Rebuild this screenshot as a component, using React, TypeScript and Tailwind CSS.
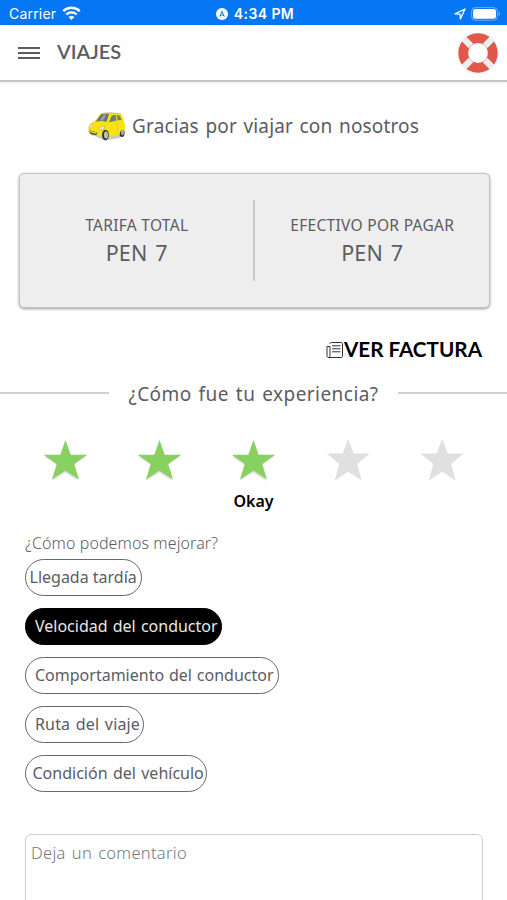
import type { ReactNode } from 'react';

interface Reason {
  label: string;
  selected?: boolean;
  box: string;
}

const REASONS: Reason[] = [
  { label: 'Llegada tardía', box: 'w-[117px] pl-[3.5px]' },
  { label: 'Velocidad del conductor', selected: true, box: 'w-[197px] pl-[9px] [word-spacing:1px]' },
  { label: 'Comportamiento del conductor', box: 'w-[254px] pl-[9px] [word-spacing:0.7px]' },
  { label: 'Ruta del viaje', box: 'w-[119px] pl-[9px] tracking-[0.15px] [word-spacing:1.3px]' },
  { label: 'Condición del vehículo', box: 'w-[182px] pl-[6.5px] [word-spacing:1.2px]' },
];

const WifiIcon = () => (
  <svg width="19" height="15" viewBox="0 0 19 15" fill="none" stroke="white">
    <path d="M1.3 5.1a11.7 11.7 0 0 1 16.4 0" strokeWidth="2.5" />
    <path d="M4.3 8.5a7.4 7.4 0 0 1 10.4 0" strokeWidth="2.4" />
    <path d="M9.5 14 6.6 11.1a4.1 4.1 0 0 1 5.8 0Z" fill="white" stroke="none" />
  </svg>
);

const LocationBadge = () => (
  <svg width="12" height="12" viewBox="0 0 12 12">
    <circle cx="6" cy="6" r="6" fill="white" />
    <path d="M6 2.3 8.9 9 6 7.2 3.1 9Z" fill="#0879f6" />
    <path d="M6 4.6 6.9 6.8H5.1Z" fill="white" />
  </svg>
);

const ArrowIcon = () => (
  <svg width="12" height="12" viewBox="0 0 12 12" fill="none" stroke="white" strokeWidth="1.3" strokeLinejoin="round">
    <path d="M1 5.8 11 1 6.4 11 6 6.1Z" />
  </svg>
);

const BatteryIcon = () => (
  <svg width="30" height="14" viewBox="0 0 30 14">
    <rect x="0.6" y="0.6" width="25.8" height="12.6" rx="3.8" fill="none" stroke="white" strokeOpacity="0.4" />
    <rect x="2" y="2" width="23" height="9.8" rx="2.4" fill="white" />
    <path d="M27.7 4.8c1.5.5 1.5 3.8 0 4.3Z" fill="white" fillOpacity="0.5" />
  </svg>
);

const LifebuoyIcon = () => (
  <svg width="42" height="42" viewBox="0 0 42 42">
    <circle cx="21" cy="21" r="14.9" fill="none" stroke="#e2574c" strokeWidth="10" />
    <path
      d="M6.8 6.8 14 14M28 28l7.2 7.2M35.2 6.8 28 14M14 28l-7.2 7.2"
      stroke="#efedef"
      strokeWidth="6.5"
    />
    <circle cx="21" cy="21" r="20.2" fill="none" stroke="#f1eff1" strokeWidth="0.7" />
  </svg>
);

const CarIcon = () => (
  <svg width="38" height="30" viewBox="0 0 38 30">
    {/* Shadow, far wheel, body */}
    <path d="M4 23 17 28.5 31 26 36 23 30 21Z" fill="#c9c9c3" />
    <ellipse cx="34" cy="20.5" rx="2.6" ry="4.6" fill="#30343a" />
    <path d="M.5 17c0-3.500 1.500-6 6-8l5-6c1.500-1.500 4-2 8-2h8c4 0 6 1 7 3.500l2.200 7c.8 4 .1 7-.8 8.500-.8-3.500-3.600-2-4.400 2.500L19 25 4 23.500c-2.500-1-3.500-3.500-3.500-6.500Z" fill="#f8e30c" />
    {/* Windows */}
    <path d="M7.800 9.800 12.400 3.200C14 1.800 17 1.600 21 2L18.500 9.800C15 8.800 11.500 9 7.800 9.800Z" fill="#5f7278" />
    <path d="m11.500 8.500 4-6 3.200-.2-3.200 6.200Z" fill="#8fa1a3" />
    <path d="M21 10.300 23.700 3.400c3-.8 6.800-.5 8.300.6l1.600 4c-3.500.3-7.800 1.200-12.600 2.300Z" fill="#6e7d78" />
    <path d="m28.200 3 1 6" stroke="#f0d90e" strokeWidth="1.200" />
    <path d="M11.500 3.200C15 0 26 0 33.500 2.800" fill="none" stroke="#b3a91e" strokeWidth="0.600" />
    {/* Headlights and grille */}
    <path d="m1.500 14 2.800-1.800 1.200 1.800-4 2.400Zm9.500 1.500 6-1.700-1 3.200-4.500 1Z" fill="#edeee0" stroke="#a5a030" strokeWidth="0.400" />
    <path d="m1 18.300 8.300 2-.8 3-6-1.300Z" fill="#54523a" />
    <path d="M2 19.500 8.500 21.100" stroke="#e2e2da" strokeWidth="1.200" />
    <path d="M29.200 10.500l.2 11" fill="none" stroke="#cdb912" strokeWidth="0.500" />
    <ellipse cx="17.400" cy="23" rx="3.400" ry="5.300" fill="#34373b" />
    <ellipse cx="18" cy="23" rx="2" ry="3.500" fill="#bfc1bd" />
    <ellipse cx="34.500" cy="20.300" rx="1.400" ry="3" fill="#aeb0aa" />
  </svg>
);

const InvoiceIcon = () => (
  <svg width="18" height="18" viewBox="0 0 18 18" fill="none" stroke="#333" strokeWidth="1">
    <path d="M4 3c0-1 .5-1.500 1.500-1.500H15c1 0 1.500.5 1.500 1.500v12c0 1-.5 1.500-1.500 1.500H3C1.500 16.500 1 16 1 14.500V5.500h3v9c0 1.300-.5 2-1.500 2M6 4.800h8.500M6 7.800h8.500M6 10.800h8.500" />
  </svg>
);

const Star = ({ filled }: { filled: boolean }) => (
  <svg width="46" height="44" viewBox="0 0 46 44">
    {filled && <path d="m23 3 5.100 14.500H44L31 26.500 36 42 23 33.500 10 42 15 26.500 2 17.500h15.900Z" fill="#e2e0e8" />}
    <path
      d={
        filled
          ? 'm23.500 1 5.200 14.700H45.300L32.200 25 37.100 40.500 23.500 31.700 9.900 40.500 14.800 25 1.700 15.700h16.600Z'
          : 'm23.200 0 5.600 14.600H44.700L32.200 25 36.700 41.500 23.200 32.700 9.700 41.500 14.200 25 1.700 14.600h15.900Z'
      }
      fill={filled ? '#88d060' : '#e0e0e0'}
    />
  </svg>
);

const Fare = ({ title, children }: { title: string; children: ReactNode }) => (
  <div className="flex-1 flex flex-col items-center pt-[39px]">
    <span className="text-[15.5px] leading-6 tracking-[0.3px]">{title}</span>
    <span className="text-[21.5px] leading-8 tracking-[0.2px] [word-spacing:2px]">{children}</span>
  </div>
);

export default function App() {
  return (
    <div className="w-full h-[900px] overflow-hidden flex flex-col bg-white text-[#5c5b64] font-['Noto_Sans',sans-serif] whitespace-nowrap">
      <div className="h-[25px] shrink-0 grid grid-cols-3 items-center bg-[#0576f4] text-white font-['Inter',sans-serif] text-[14px] pl-[9px] pr-[6px] pt-[2px]">
        <div className="flex items-center gap-[6px]">
          <span className="tracking-[0.2px]">Carrier</span>
          <WifiIcon />
        </div>
        <div className="flex items-center justify-center gap-[6px]">
          <LocationBadge />
          <span className="font-semibold tracking-[0.4px]">4:34 PM</span>
        </div>
        <div className="flex items-center justify-end gap-[5px]">
          <ArrowIcon />
          <BatteryIcon />
        </div>
      </div>

      <header className="h-[57px] shrink-0 flex items-center pl-[18px] pr-[8px] border-b-2 border-[#c5c5c5] shadow-[0_1px_2px_rgba(0,0,0,0.08)]">
        <div className="w-[22px] mt-px flex flex-col gap-[3px]">
          <div className="h-[2px] bg-[#5c5b64]" />
          <div className="h-[2px] bg-[#5c5b64]" />
          <div className="h-[2px] bg-[#5c5b64]" />
        </div>
        <h1 className="ml-[17px] mb-[3px] text-[20px] font-semibold font-['Lato',sans-serif]">VIAJES</h1>
        <div className="ml-auto">
          <LifebuoyIcon />
        </div>
      </header>

      <div className="h-[89px] mb-[2px] shrink-0 flex items-center justify-center gap-[6px]">
        <CarIcon />
        <span className="text-[19px] tracking-[0.15px] [word-spacing:1.5px]">Gracias por viajar con nosotros</span>
      </div>

      <section className="h-[135px] shrink-0 ml-[19px] mr-[17px] flex rounded-[5px] border border-[#c4c4c4] bg-[#eee] shadow-[0_1px_3px_rgba(0,0,0,0.4)]">
        <Fare title="TARIFA TOTAL">PEN 7</Fare>
        <div className="w-[2px] h-[81px] mt-[26px] -ml-px mr-px bg-[#cbcbcb]" />
        <Fare title="EFECTIVO POR PAGAR">PEN 7</Fare>
      </section>

      <div className="h-[26px] shrink-0 mt-[29px] pr-[25px] flex items-center justify-end text-black font-['Lato',sans-serif] text-[20.7px] font-bold">
        <InvoiceIcon />
        <span>VER FACTURA</span>
      </div>

      <div className="h-[30px] shrink-0 mt-[16px] flex items-center">
        <div className="w-[109px] h-[2px] mb-[2px] bg-[#d0d0d0]" />
        <h2 className="flex-1 text-center text-[19px] tracking-[0.45px] [word-spacing:1.5px]">¿Cómo fue tu experiencia?</h2>
        <div className="w-[109px] h-[2px] mb-[2px] bg-[#d0d0d0]" />
      </div>

      <div className="shrink-0 mt-[30px] mx-[18px] grid grid-cols-5 justify-items-center">
        {[1, 2, 3, 4, 5].map(n => (
          <Star key={n} filled={n <= 3} />
        ))}
      </div>
      <p className="shrink-0 mt-[6px] h-6 text-center text-black text-[16px] leading-6 font-semibold">Okay</p>

      <div className="shrink-0 px-[25px] pt-[18px]">
        <p className="h-6 leading-6 text-[16px] font-light tracking-[0.1px]">¿Cómo podemos mejorar?</p>
        <div className="mt-[4px] flex flex-col gap-[12px]">
          {REASONS.map(reason => (
            <button
              key={reason.label}
              className={`h-[37px] rounded-full border pb-px text-left text-[16px] ${reason.box} ${
                reason.selected ? 'bg-black border-black text-[#e8e8e8]' : 'bg-white border-[#68676c]'
              }`}
            >
              {reason.label}
            </button>
          ))}
        </div>
        <div className="mt-[42px] h-[110px] w-[458px] rounded-[6px] border border-[#cfcfcf] px-[5px] pt-[6px] text-[16.5px] leading-6 font-light tracking-[0.3px] [word-spacing:1.5px] text-[#77777c]">
          Deja un comentario
        </div>
      </div>
    </div>
  );
}
